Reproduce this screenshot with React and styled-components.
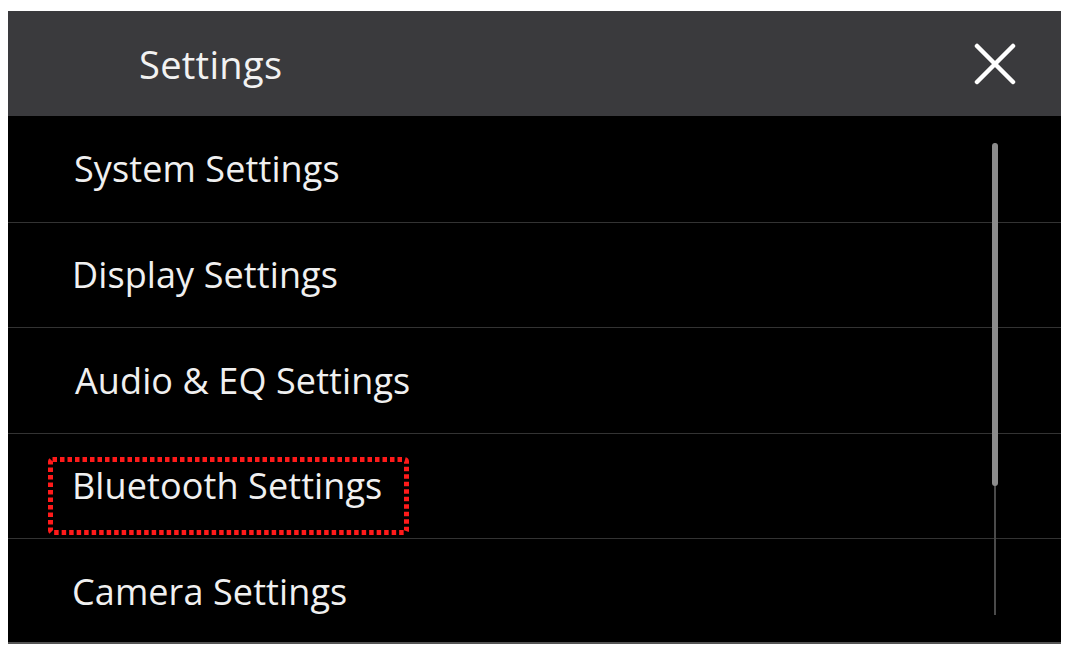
import React from 'react';
import styled, { createGlobalStyle } from 'styled-components';

const GlobalStyle = createGlobalStyle`
  html, body {
    margin: 0;
    padding: 0;
    background: #ffffff;
  }
  body {
    font-family: "Open Sans", "Noto Sans", sans-serif;
  }
`;

const Page = styled.div`
  padding: 11px 0 0 8px;
  width: 1066px;
  height: 651px;
  box-sizing: border-box;
`;

const Panel = styled.div`
  width: 1053px;
  height: 633px;
  background: #000;
  display: flex;
  flex-direction: column;
  border-bottom: 2px solid #555;
  box-sizing: border-box;
`;

const Header = styled.div`
  height: 105px;
  flex: none;
  background: #3a3a3d;
  display: flex;
  align-items: center;
  justify-content: space-between;
  padding: 0 44px 0 131px;
`;

const Title = styled.div`
  color: #f2f2f2;
  font-size: 38px;
  letter-spacing: 0.3px;
`;

const CloseButton = styled.button`
  background: none;
  border: none;
  padding: 0;
  width: 44px;
  height: 44px;
  display: flex;
  align-items: center;
  justify-content: center;
  cursor: pointer;
`;

const Body = styled.div`
  flex: 1;
  display: flex;
  position: relative;
`;

const List = styled.div`
  flex: 1;
  display: flex;
  flex-direction: column;
`;

const Row = styled.div`
  height: 105.5px;
  flex: none;
  display: flex;
  align-items: center;
  padding-left: ${p => p.$indent}px;
  box-sizing: border-box;
  border-top: ${p => (p.$first ? 'none' : '1px solid #333')};
  position: relative;
`;

const Label = styled.span`
  color: #f0f0f0;
  font-size: 36px;
  letter-spacing: 0.1px;
`;

const Highlight = styled.svg`
  position: absolute;
  left: 40px;
  top: 23px;
  overflow: visible;
`;

const ScrollTrack = styled.div`
  position: absolute;
  left: 986px;
  top: 27px;
  width: 2px;
  height: 472px;
  background: #4a4a4a;
`;

const ScrollThumb = styled.div`
  position: absolute;
  left: -2px;
  top: 0;
  width: 6px;
  height: 343px;
  border-radius: 3px;
  background: #8c8c8c;
`;

const items = [
  { label: 'System Settings', indent: 66 },
  { label: 'Display Settings', indent: 64 },
  { label: 'Audio & EQ Settings', indent: 67 },
  { label: 'Bluetooth Settings', indent: 64, focused: true },
  { label: 'Camera Settings', indent: 64 },
];

const App = () => (
  <>
    <GlobalStyle />
    <Page>
      <Panel>
        <Header>
          <Title>Settings</Title>
          <CloseButton aria-label="Close">
            <svg width="42" height="42" viewBox="0 0 42 42">
              <path d="M3 3 L39 39 M39 3 L3 39" stroke="#fff" strokeWidth="4.5" strokeLinecap="round" />
            </svg>
          </CloseButton>
        </Header>
        <Body>
          <List>
            {items.map((item, i) => (
              <Row key={item.label} $indent={item.indent} $first={i === 0}>
                {item.focused && (
                  <Highlight width="361" height="78">
                    <rect
                      x="2.5"
                      y="2.5"
                      width="356"
                      height="73"
                      fill="none"
                      stroke="#ff1a1a"
                      strokeWidth="5"
                      strokeDasharray="4.5 3"
                      rx="2"
                    />
                  </Highlight>
                )}
                <Label>{item.label}</Label>
              </Row>
            ))}
          </List>
          <ScrollTrack>
            <ScrollThumb />
          </ScrollTrack>
        </Body>
      </Panel>
    </Page>
  </>
);

export default App;
